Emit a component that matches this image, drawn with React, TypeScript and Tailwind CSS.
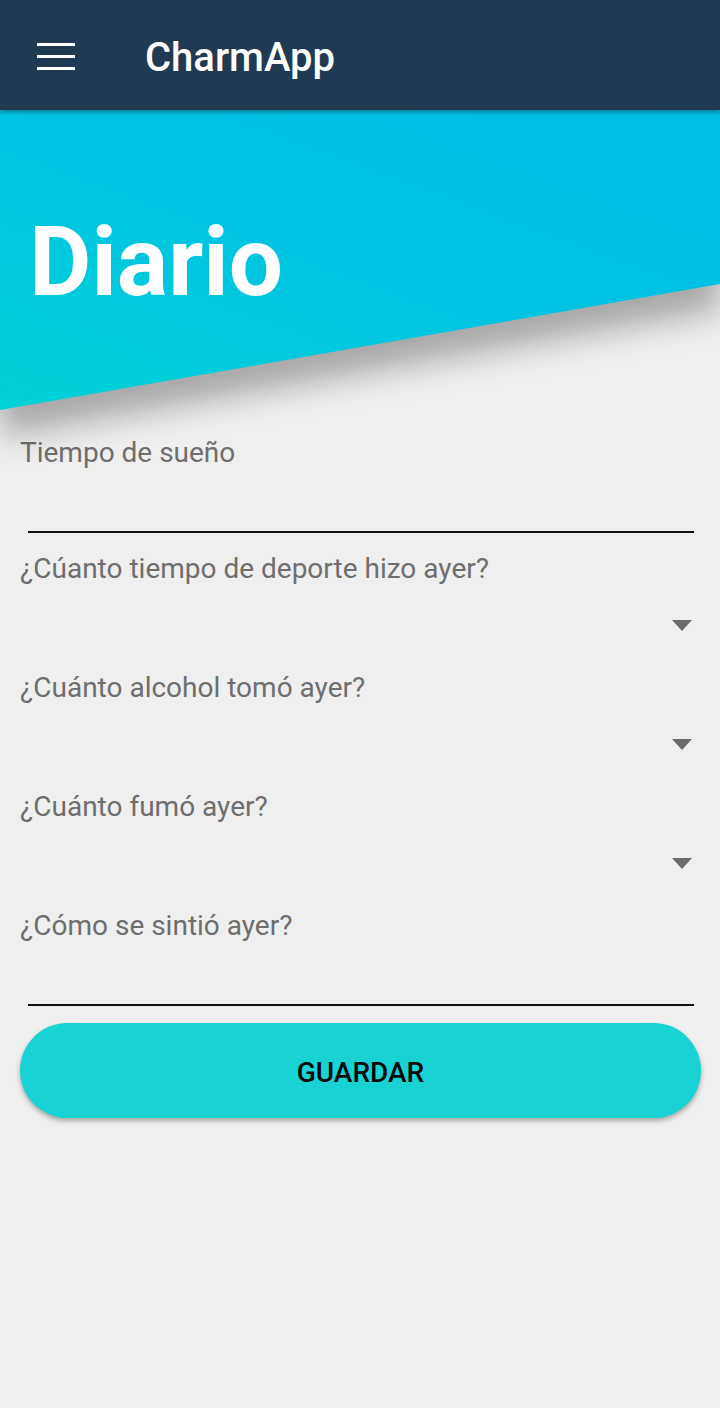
import React from "react";

function Caret() {
  return (
    <svg width="20" height="11" viewBox="0 0 20 11" className="block">
      <path d="M0 0 H20 L10 11 Z" fill="#6b6b6b" />
    </svg>
  );
}

function TextField({label}: {label: string}) {
  return (
    <div className="flex flex-col">
      <label className="text-[28px] leading-[34px] text-[#6e6e6e] pl-5">{label}</label>
      <div className="h-[63px] ml-7 mr-[26px] border-b-2 border-[#111]" />
    </div>
  );
}

function SelectField({label}: {label: string}) {
  return (
    <div className="flex flex-col">
      <label className="text-[28px] leading-[34px] text-[#6e6e6e] pl-5">{label}</label>
      <div className="h-[85px] flex items-start justify-end pt-[34px] pr-7">
        <Caret />
      </div>
    </div>
  );
}

export default function App() {
  return (
    <div className="min-h-[1408px] bg-[#efefef] font-['Roboto',sans-serif]">
      <header className="relative z-20 h-[110px] bg-[#1f3a52] flex items-center shadow-[0_2px_4px_rgba(0,0,0,0.35)]">
        <button className="ml-[37px] mt-[2px] w-[38px] flex flex-col gap-[9px]">
          <span className="block h-[3px] bg-white" />
          <span className="block h-[3px] bg-white" />
          <span className="block h-[3px] bg-white" />
        </button>
        <h1 className="ml-[70px] mt-[5px] text-[40px] font-medium text-white leading-none">CharmApp</h1>
      </header>

      <div className="relative z-10 drop-shadow-[0_26px_16px_rgba(0,0,0,0.3)]">
        <div className="h-[300px] bg-[linear-gradient(200deg,#00bde4_0%,#00c3e2_50%,#00d2d6_100%)] [clip-path:polygon(0_0,100%_0,100%_174px,0_300px)]">
          <h2 className="pt-[104px] pl-[29px] text-[96px] font-bold text-white leading-none">Diario</h2>
        </div>
      </div>

      <form className="flex flex-col pt-[26px]">
        <TextField label="Tiempo de sueño" />
        <div className="pt-[19px]">
          <SelectField label="¿Cúanto tiempo de deporte hizo ayer?" />
          <SelectField label="¿Cuánto alcohol tomó ayer?" />
          <SelectField label="¿Cuánto fumó ayer?" />
          <TextField label="¿Cómo se sintió ayer?" />
        </div>
        <div className="pt-[17px] pl-5 pr-[19px]">
          <button
            type="button"
            className="w-full h-[95px] pt-1 rounded-full bg-[#19d2d4] text-[28px] font-medium text-[#0a0a0a] shadow-[0_3px_5px_rgba(0,0,0,0.3)]"
          >
            GUARDAR
          </button>
        </div>
      </form>
    </div>
  );
}
